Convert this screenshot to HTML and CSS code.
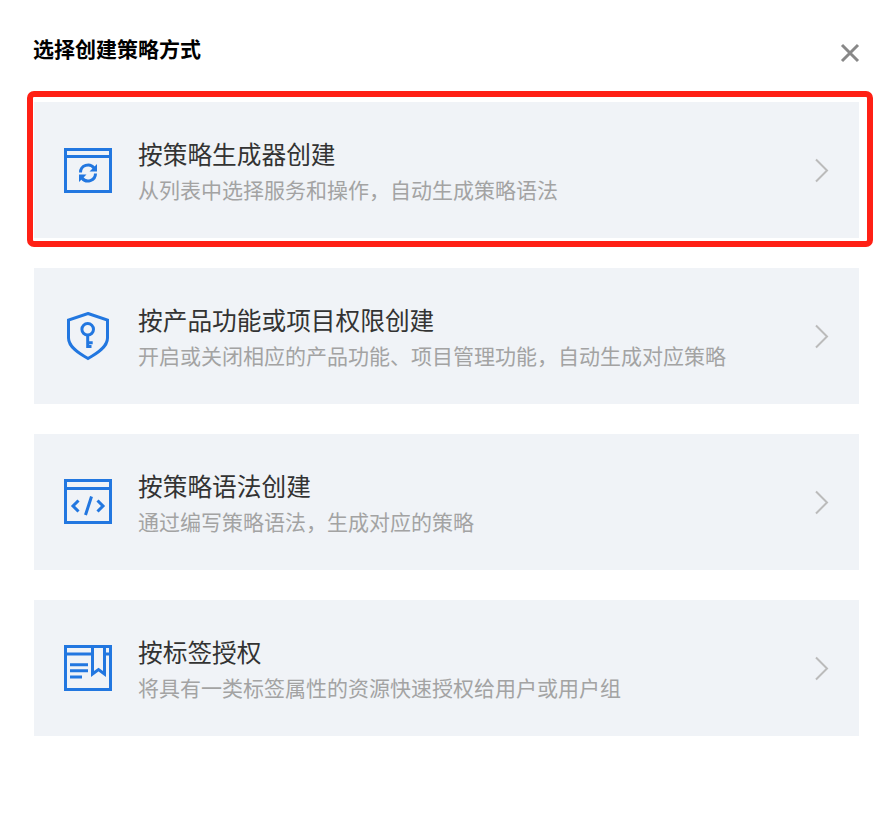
FILE: index.html
```html
<!DOCTYPE html>
<html lang="zh">
<head>
<meta charset="utf-8">
<title>选择创建策略方式</title>
<link rel="stylesheet" href="styles.css">
</head>
<body>
<div class="dialog">
  <header class="head">
    <h1 class="title">选择创建策略方式</h1>
    <svg class="close" width="20" height="20" viewBox="0 0 20 20"><path d="M2 2 18 18M18 2 2 18" fill="none" stroke="#888" stroke-width="3"/></svg>
  </header>
  <div class="list">
    <div class="card">
      <svg class="icon" width="50" height="50" viewBox="0 0 50 50" fill="none" stroke="#2277e0">
        <path stroke-width="3" d="M2.500 3.500H47.500V45.500H2.500ZM2.500 10.500H47.500"/>
        <path stroke-width="3" d="M17.500 26.500a7.500 7.500 0 0 1 13.500-4.500M32.500 27.500a7.500 7.500 0 0 1-13.500 4.500"/>
        <path fill="#2277e0" stroke="none" d="M34 18v7.500h-7.500zM16 36v-7.500h7.500z"/>
      </svg>
      <div class="text">
        <div class="name">按策略生成器创建</div>
        <div class="desc">从列表中选择服务和操作，自动生成策略语法</div>
      </div>
      <svg class="chev" width="16" height="26" viewBox="0 0 16 26"><path d="M2 1.500 13 12.500 2 23.500" fill="none" stroke="#bbb" stroke-width="2"/></svg>
    </div>
    <div class="card">
      <svg class="icon" width="50" height="50" viewBox="0 0 50 50" fill="none" stroke="#2277e0">
        <path stroke-width="3" d="M25 1.500 44.500 8V26C44.500 35 34 41.500 25 46.500 16 41.500 5.500 35 5.500 26V8Z"/>
        <circle stroke-width="3" cx="24.700" cy="17.300" r="5.800"/>
        <path stroke-width="3" d="M24.700 23V36M24.700 30.700H29.700M24.700 34.500H28.500"/>
      </svg>
      <div class="text">
        <div class="name">按产品功能或项目权限创建</div>
        <div class="desc">开启或关闭相应的产品功能、项目管理功能，自动生成对应策略</div>
      </div>
      <svg class="chev" width="16" height="26" viewBox="0 0 16 26"><path d="M2 1.500 13 12.500 2 23.500" fill="none" stroke="#bbb" stroke-width="2"/></svg>
    </div>
    <div class="card">
      <svg class="icon" width="50" height="50" viewBox="0 0 50 50" fill="none" stroke="#2277e0">
        <path stroke-width="3" d="M2.500 2.500H47.500V44.500H2.500ZM2.500 10.500H47.500"/>
        <path stroke-width="3" d="M15.500 22.500 10 28 15.500 33.500M34.500 22.500 40 28 34.500 33.500M28.500 18.500 22.500 37"/>
      </svg>
      <div class="text">
        <div class="name">按策略语法创建</div>
        <div class="desc">通过编写策略语法，生成对应的策略</div>
      </div>
      <svg class="chev" width="16" height="26" viewBox="0 0 16 26"><path d="M2 1.500 13 12.500 2 23.500" fill="none" stroke="#bbb" stroke-width="2"/></svg>
    </div>
    <div class="card">
      <svg class="icon" width="50" height="50" viewBox="0 0 50 50" fill="none" stroke="#2277e0">
        <path stroke-width="3" d="M2.500 2.500H47.500V45.500H2.500ZM2.500 10H29.500M41.500 10H47.500"/>
        <path stroke-width="3" d="M29.500 2.500V30 L35.500 25.500 41.500 30V2.500"/>
        <path stroke-width="3" d="M7 20.700H25M7 26.700H25M7 33H19"/>
      </svg>
      <div class="text">
        <div class="name">按标签授权</div>
        <div class="desc">将具有一类标签属性的资源快速授权给用户或用户组</div>
      </div>
      <svg class="chev" width="16" height="26" viewBox="0 0 16 26"><path d="M2 1.500 13 12.500 2 23.500" fill="none" stroke="#bbb" stroke-width="2"/></svg>
    </div>
  </div>
</div>
<div class="highlight"></div>
</body>
</html>
```
FILE: styles.css
```css
html, body {
  margin: 0;
  padding: 0;
  background: #fff;
}
body {
  position: relative;
  width: 893px;
  height: 816px;
  overflow: hidden;
  font-family: "Noto Sans CJK SC", "Noto Sans", sans-serif;
}
.dialog {
  padding: 32px 34px 0;
}
.head {
  display: flex;
  justify-content: space-between;
  align-items: flex-start;
  height: 70px;
}
.title {
  margin: 0 0 0 -1px;
  font-size: 21px;
  line-height: 32px;
  font-weight: 700;
  color: #000;
}
.close {
  margin: 11px -1px 0 0;
}
.list {
  display: flex;
  flex-direction: column;
  gap: 30px;
}
.card {
  display: flex;
  align-items: center;
  height: 136px;
  background: #f0f3f7;
  padding: 0 29px;
}
.icon {
  flex: none;
  margin-top: 2px;
}
.chev {
  flex: none;
  margin-top: 2px;
}
.text {
  flex: 1;
  margin: -2px 0 0 25px;
}
.name {
  font-size: 24.7px;
  line-height: 36px;
  color: #333;
  margin-bottom: 3px;
}
.desc {
  font-size: 21px;
  line-height: 30px;
  color: #a3a3a3;
}
.highlight {
  position: absolute;
  left: 27px;
  top: 91px;
  width: 846px;
  height: 156px;
  box-sizing: border-box;
  border: 6px solid #ff2015;
  border-radius: 7px;
}
```
